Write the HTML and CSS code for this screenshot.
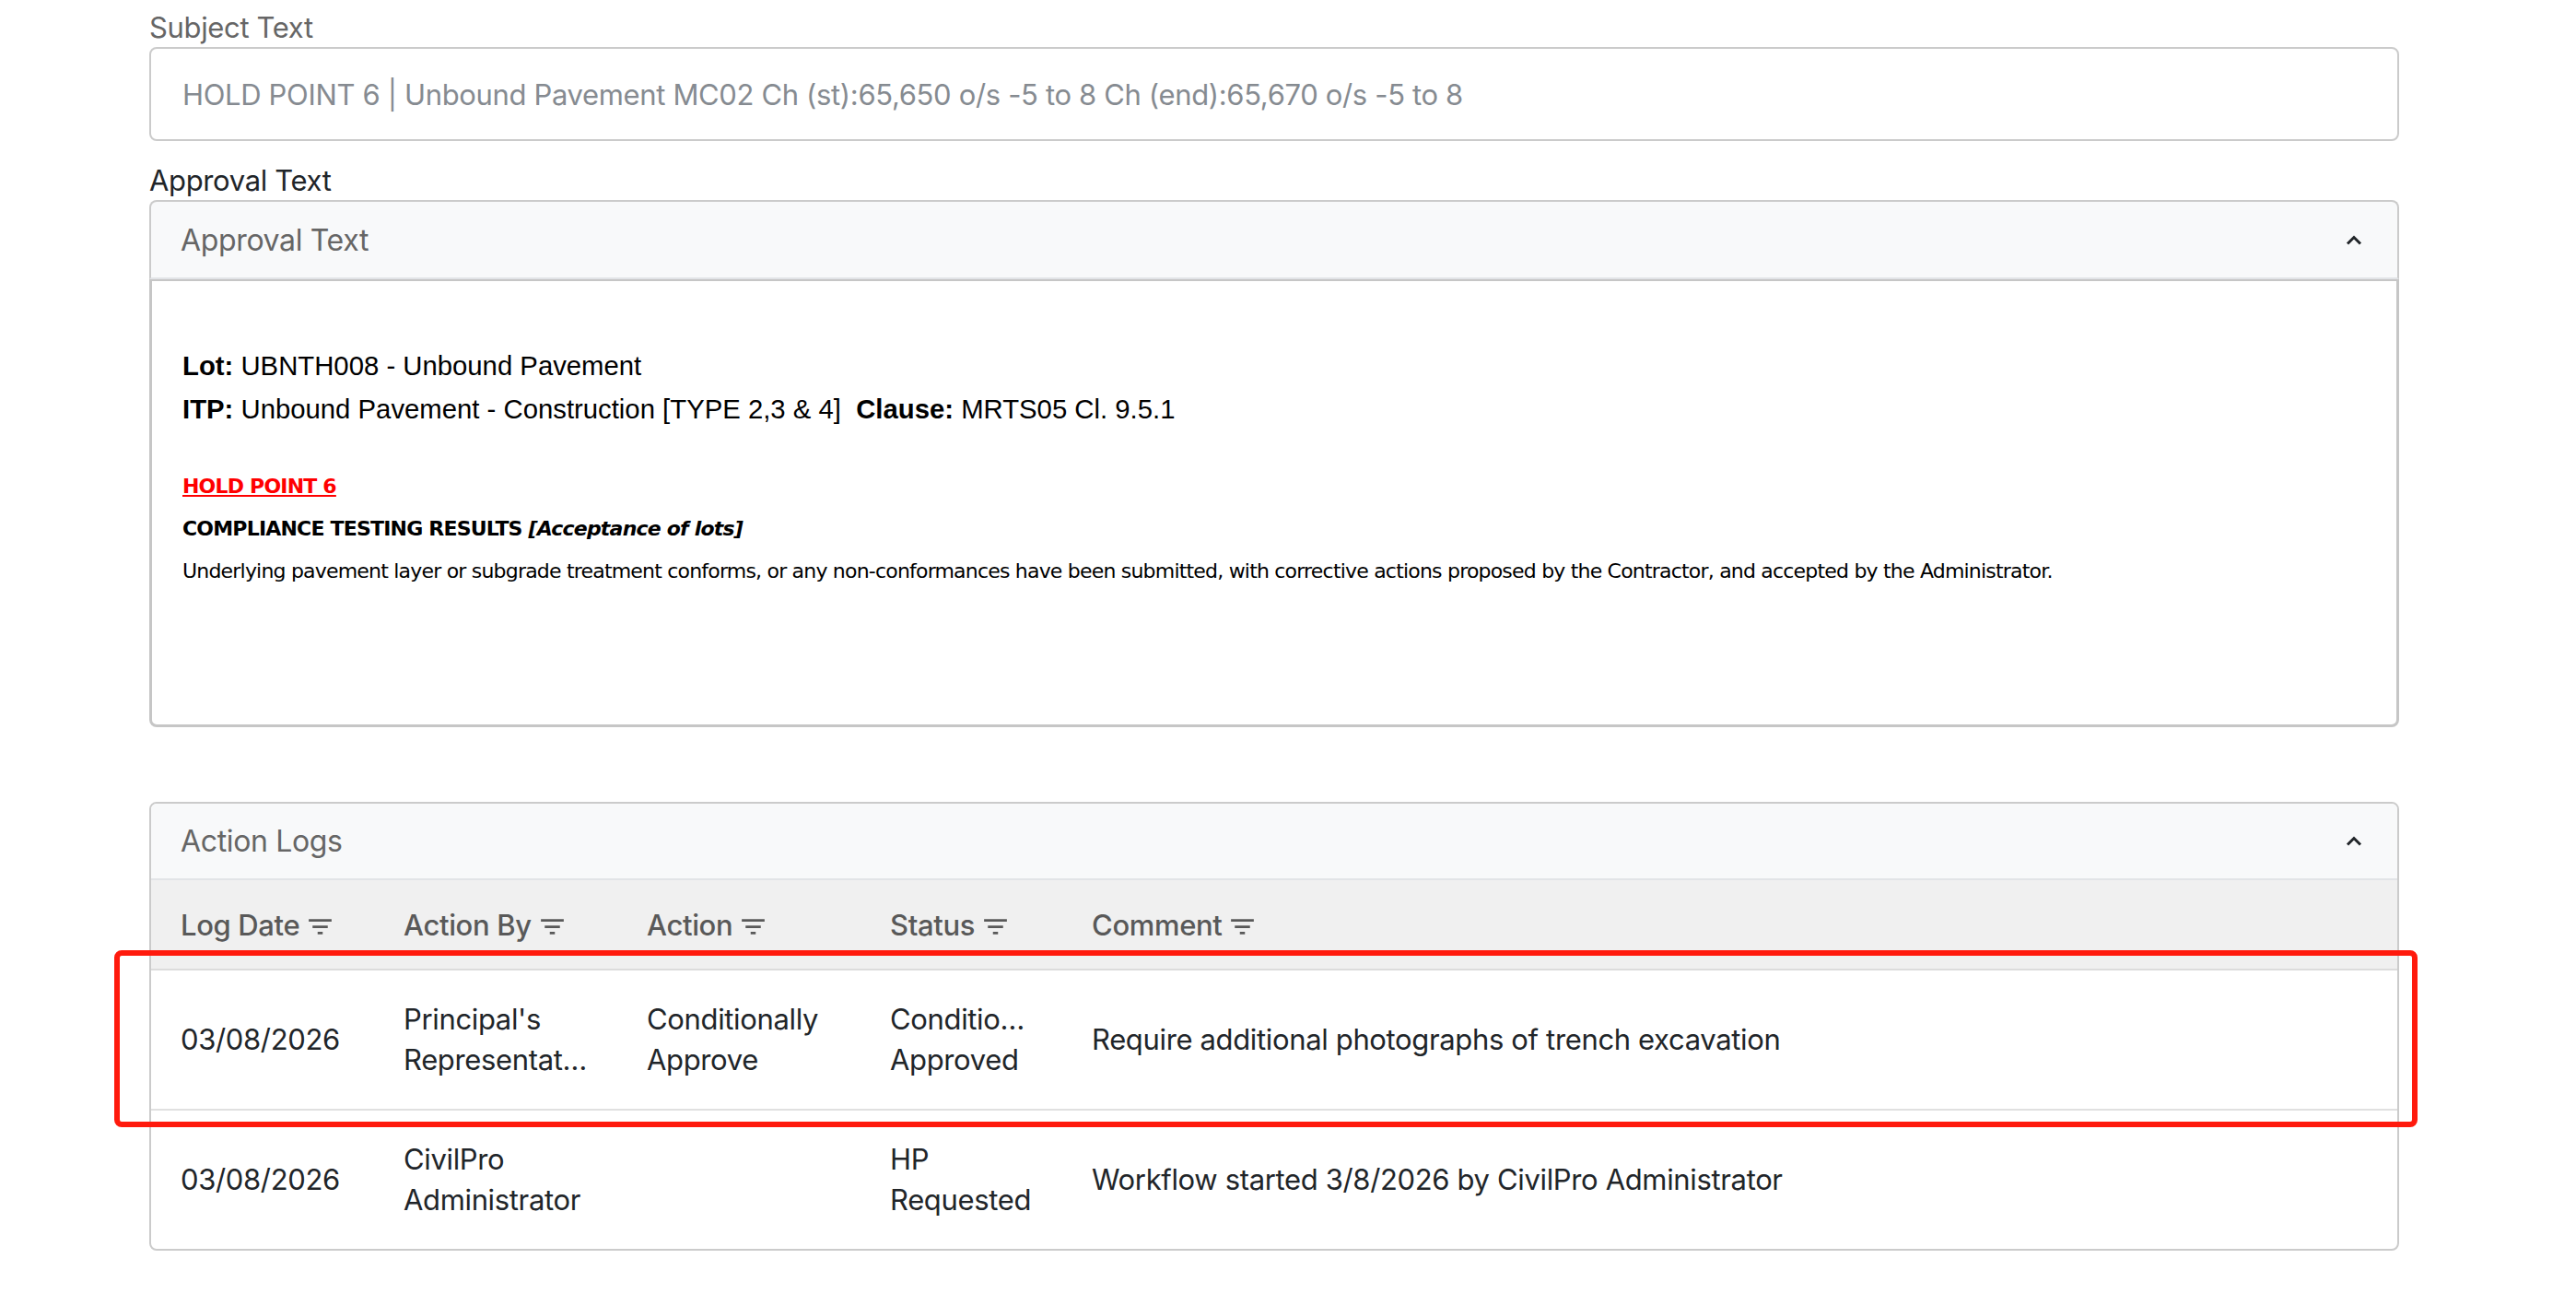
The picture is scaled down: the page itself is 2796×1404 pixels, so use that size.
FILE: index.html
```html
<!DOCTYPE html>
<html lang="en">
<head>
    <meta charset="UTF-8">
    <title>Hold Point Approval</title>
    <link rel="stylesheet" href="styles.css">
</head>
<body>

    <div class="page">
        <label class="field-label muted">Subject Text</label>
        <div class="subject-box">HOLD POINT 6 | Unbound Pavement MC02 Ch (st):65,650 o/s -5 to 8 Ch (end):65,670 o/s -5 to 8</div>

        <label class="field-label approval-label">Approval Text</label>
        <div class="card">
            <div class="card-header">
                <span>Approval Text</span>
                <svg class="chevron" width="18" height="11" viewBox="0 0 18 11"><polyline points="2,9.5 9,2.5 16,9.5" fill="none" stroke="#212529" stroke-width="3"/></svg>
            </div>
            <div class="approval-frame">
                <p class="lot-line"><b>Lot:</b> UBNTH008 - Unbound Pavement</p>
                <p class="lot-line"><b>ITP:</b> Unbound Pavement - Construction [TYPE 2,3 &amp; 4]&nbsp; <b>Clause:</b> MRTS05 Cl. 9.5.1</p>

                <div class="hp-text">
                    <p class="hp-title">HOLD POINT 6</p>
                    <p><b>COMPLIANCE TESTING RESULTS <i>[Acceptance of lots]</i></b></p>
                    <p>Underlying pavement layer or subgrade treatment conforms, or any non-conformances have been submitted, with corrective actions proposed by the Contractor, and accepted by the Administrator.</p>
                </div>
            </div>
        </div>

        <div class="card logs-card">
            <div class="card-header logs-header">
                <span>Action Logs</span>
                <svg class="chevron" width="18" height="11" viewBox="0 0 18 11"><polyline points="2,9.5 9,2.5 16,9.5" fill="none" stroke="#212529" stroke-width="3"/></svg>
            </div>
            <table class="logs">
                <colgroup>
                    <col class="c-date">
                    <col class="c-by">
                    <col class="c-action">
                    <col class="c-status">
                    <col>
                </colgroup>
                <thead>
                    <tr>
                        <th>Log Date <svg class="filter" viewBox="0 0 24 24"><path d="M10 18h4v-2h-4v2zM3 6v2h18V6H3zm3 7h12v-2H6v2z"/></svg></th>
                        <th>Action By <svg class="filter" viewBox="0 0 24 24"><path d="M10 18h4v-2h-4v2zM3 6v2h18V6H3zm3 7h12v-2H6v2z"/></svg></th>
                        <th>Action <svg class="filter" viewBox="0 0 24 24"><path d="M10 18h4v-2h-4v2zM3 6v2h18V6H3zm3 7h12v-2H6v2z"/></svg></th>
                        <th>Status <svg class="filter" viewBox="0 0 24 24"><path d="M10 18h4v-2h-4v2zM3 6v2h18V6H3zm3 7h12v-2H6v2z"/></svg></th>
                        <th>Comment <svg class="filter" viewBox="0 0 24 24"><path d="M10 18h4v-2h-4v2zM3 6v2h18V6H3zm3 7h12v-2H6v2z"/></svg></th>
                    </tr>
                </thead>
                <tbody>
                    <tr>
                        <td>03/08/2026</td>
                        <td class="narrow"><span class="ln">Principal's</span><span class="ln">Representative</span></td>
                        <td><span class="ln">Conditionally</span><span class="ln">Approve</span></td>
                        <td class="narrow"><span class="ln">Conditionally</span><span class="ln">Approved</span></td>
                        <td>Require additional photographs of trench excavation</td>
                    </tr>
                    <tr>
                        <td>03/08/2026</td>
                        <td class="narrow"><span class="ln">CivilPro</span><span class="ln">Administrator</span></td>
                        <td></td>
                        <td class="narrow"><span class="ln">HP</span><span class="ln">Requested</span></td>
                        <td>Workflow started 3/8/2026 by CivilPro Administrator</td>
                    </tr>
                </tbody>
            </table>

            <!-- highlight box from the screenshot -->
            <div class="highlight-box"></div>
        </div>
    </div>

</body>
</html>
```

FILE: styles.css
```css
/* page */
body {
    margin: 0;
    background-color: #fff;
    font-family: Inter, "Noto Sans", sans-serif;
    font-size: 31px;
    letter-spacing: -0.35px;
    color: #212529;
}
.page {
    padding: 0 192px 40px 162px;
}
p {
    margin: 0;
}

/* labels and subject */
.field-label {
    display: block;
    line-height: 38px;
    padding-top: 11px;
    margin-bottom: 2px;
}
.muted {
    color: #666;
}
.approval-label {
    padding-top: 0;
    margin-top: 24px;
}
.subject-box {
    box-sizing: border-box;
    height: 102px;
    display: flex;
    align-items: center;
    padding: 0 34px;
    border: 2px solid #cbcbcb;
    border-radius: 8px;
    color: #868b91;
}

/* cards */
.card {
    position: relative;
}
.card-header {
    box-sizing: border-box;
    height: 86px;
    display: flex;
    align-items: center;
    justify-content: space-between;
    padding: 0 38px 0 32px;
    background-color: #f8f9fa;
    border: 2px solid #cbcbcb;
    border-bottom: 2px solid #e2e4e7;
    border-radius: 8px 8px 0 0;
    color: #666;
    font-size: 32px;
}
.chevron {
    display: block;
}
.approval-frame {
    box-sizing: border-box;
    height: 486px;
    padding: 68px 33px 0;
    border: 3px solid #c6c6c6;
    border-top-width: 2px;
    border-radius: 0 0 8px 8px;
    font-family: "Liberation Sans", Arial, sans-serif;
    letter-spacing: 0;
    color: #000;
}
.lot-line {
    font-size: 29.3px;
    line-height: 47px;
}
.hp-text {
    margin-top: 38px;
    font-family: "DejaVu Sans", Tahoma, sans-serif;
    font-size: 22px;
    line-height: 46px;
    letter-spacing: -0.8px;
}
.hp-title {
    color: #f00;
    font-weight: bold;
    text-decoration: underline;
}

/* action logs */
.logs-card {
    margin-top: 81px;
    border: 2px solid #cbcbcb;
    border-radius: 8px;
}
.logs-header {
    height: 83px;
    border: none;
    border-bottom: 2px solid #e2e4e7;
    border-radius: 6px 6px 0 0;
}
.logs {
    width: 100%;
    border-collapse: collapse;
    table-layout: fixed;
}
.c-date { width: 242px; }
.c-by { width: 264px; }
.c-action { width: 264px; }
.c-status { width: 219px; }
.logs th {
    height: 96px;
    padding: 0 32px;
    text-align: left;
    background-color: #f0f0f0;
    border-bottom: 2px solid #dcdcdc;
    color: #595959;
    font-weight: 500;
    white-space: nowrap;
}
.filter {
    width: 33px;
    height: 33px;
    vertical-align: -7px;
    margin-left: -2px;
    fill: #595959;
}
.logs td {
    height: 88px;
    padding: 31px 32px;
    line-height: 44px;
    vertical-align: middle;
}
.logs td.narrow {
    padding-right: 30px;
}
.logs tbody tr + tr td {
    border-top: 2px solid #e0e0e0;
}
.ln {
    display: block;
    overflow: hidden;
    white-space: nowrap;
    text-overflow: ellipsis;
}
.highlight-box {
    position: absolute;
    left: -40px;
    top: 159px;
    width: 2500px;
    height: 192px;
    box-sizing: border-box;
    border: 6px solid #ff1a0d;
    border-radius: 8px;
    pointer-events: none;
}
```
